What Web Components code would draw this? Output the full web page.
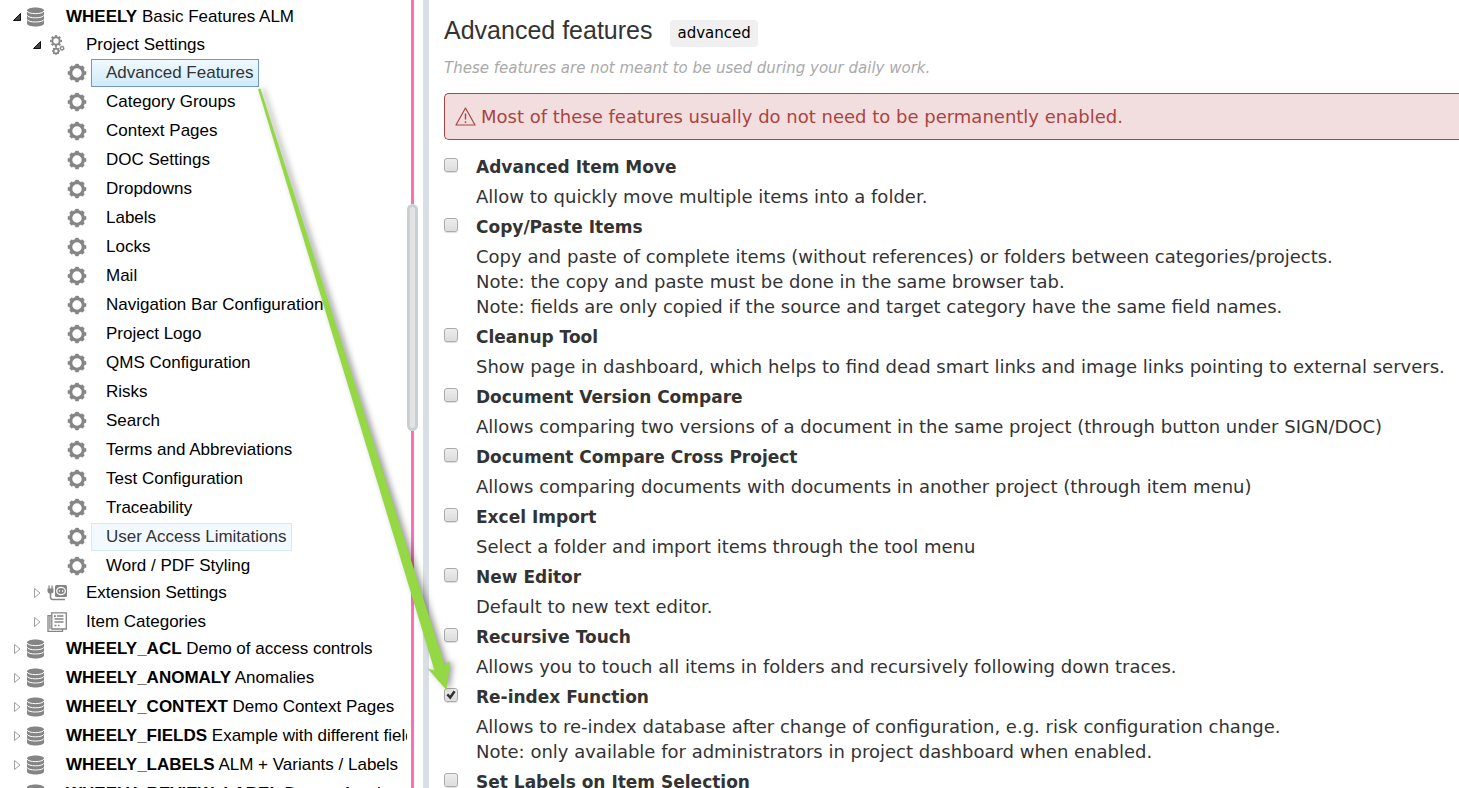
<!DOCTYPE html>
<html lang="en">
<head>
<meta charset="utf-8">
<title>Project settings – Advanced features</title>
<style>
  html, body { margin: 0; height: 100%; }
  body { overflow: hidden; background: #fff; color: #333; font-family: "DejaVu Sans", Verdana, sans-serif; font-size: 18px; }
</style>
</head>
<body>

<template id="tpl-shell">
  <style>
    :host { display: grid; grid-template-columns: 407px 11px 5px 6px minmax(0, 1fr); height: 100vh; overflow: hidden; position: relative; }
    nav, main { overflow: hidden; min-width: 0; min-height: 0; }
    .bar { background: #d9dfe4; grid-column: 4; }
    main { padding-left: 15px; grid-column: 5; }
  </style>
  <nav aria-label="Projects"><slot name="tree"></slot></nav>
  <scroll-rail></scroll-rail>
  <div class="bar"></div>
  <main><slot></slot></main>
  <slot name="overlay"></slot>
</template>

<template id="tpl-rail">
  <style>
    :host { display: grid; grid-template-rows: 204fr 227fr 357fr; justify-items: center; }
    i { width: 3px; background: #ff6fb7; }
    b { width: 11px; box-sizing: border-box; border: 3px solid #c9cfd3; border-radius: 6px; background: #e4e4e4; }
  </style>
  <i></i><b></b><i></i>
</template>

<template id="tpl-tree">
  <style>
    :host { display: block; padding-top: 2px; font-family: "Liberation Sans", Arial, sans-serif; font-size: 17px; color: #000; }
  </style>
  <slot></slot>
</template>

<template id="tpl-node">
  <style>
    :host { display: block; }
    .row { display: flex; align-items: center; height: 29px; padding-left: 7px; white-space: nowrap; }
    .toggle { all: unset; box-sizing: border-box; width: 20px; height: 20px; flex: none; display: flex; align-items: center; justify-content: center; }
    tree-icon { margin-right: 4px; }
    a { box-sizing: border-box; height: 28px; line-height: 26px; padding: 0 5px 0 14px; border: 1px solid transparent; color: inherit; text-decoration: none; }
    :host([state=selected]) a { border-color: #6f97c8; background: linear-gradient(#f0f9fe, #d0ebfa); color: #333; }
    :host([state=hover]) a { border-color: #d6eaf6; background: #f3faff; color: #333; }
    .kids { padding-left: 20px; }
    .kids.filled { margin: -1px 0 -2px; }
  </style>
  <div class="row">
    <span class="toggle"></span>
    <tree-icon></tree-icon>
    <a href="#"><b></b><span></span></a>
  </div>
  <div class="kids"><slot></slot></div>
</template>

<template id="tpl-header">
  <style>
    :host { display: block; padding-top: 16px; }
    .line { display: flex; align-items: flex-start; gap: 18px; }
    h1 { margin: 0; font: 25px/28px "Liberation Sans", Arial, sans-serif; }
    .tag { margin-top: 4px; padding: 0 7px; border-radius: 4px; background: #f0f0f0; color: #000; font-size: 15px; line-height: 27px; }
    p { margin: 11px 0 15px; color: #aaa; font-style: italic; font-size: 15px; line-height: 20px; }
  </style>
  <div class="line"><h1><slot name="title"></slot></h1><span class="tag"><slot name="tag"></slot></span></div>
  <p><slot></slot></p>
</template>

<template id="tpl-alert">
  <style>
    :host { display: flex; align-items: center; gap: 5px; box-sizing: border-box; padding: 10px; margin-bottom: 15px;
      border: 1px solid #a94442; border-right: 0; border-radius: 5px 0 0 5px; background: #f2dede; color: #a94442; line-height: 25px; }
    svg { flex: none; }
  </style>
  <svg width="21" height="20" viewBox="0 0 21 20" fill="none" stroke="currentColor" aria-hidden="true">
    <path d="M10.5 1 L20 18 H1 Z" stroke-width="1.2" stroke-linejoin="round"/>
    <path d="M10.5 6.500 V12.500" stroke-width="1.4"/><circle cx="10.5" cy="15.1" r=".9" fill="currentColor" stroke="none"/>
  </svg>
  <span><slot></slot></span>
</template>

<template id="tpl-option">
  <style>
    :host { display: grid; grid-template-columns: 14px minmax(0, 1fr); column-gap: 18px; margin-bottom: 6px; line-height: 25px; }
    input { appearance: none; box-sizing: border-box; width: 14px; height: 14px; margin: 3px 0 0; border: 1px solid #aaa; border-radius: 3px;
      background: linear-gradient(#ededed, #dcdcdc); box-shadow: 0 1px 1px #0002, inset 0 0 1px #fff; display: grid; place-items: center; }
    input:checked::after { content: ""; width: 10px; height: 10px; background: #333; clip-path: polygon(4% 52%, 22% 36%, 40% 56%, 76% 4%, 96% 20%, 44% 94%); }
    label { font-weight: bold; font-size: 17px; }
    .text { grid-column: 2; padding-top: 4px; white-space: nowrap; }
  </style>
  <input type="checkbox" id="box">
  <label for="box"></label>
  <div class="text"><slot></slot></div>
</template>

<template id="tpl-arrow">
  <style>
    :host { position: absolute; left: 0; top: 0; pointer-events: none; }
    svg { display: block; filter: drop-shadow(3px 0 3px #0006); }
  </style>
  <svg width="470" height="710" viewBox="0 0 470 710" aria-hidden="true">
    <path fill="#94d843" d="M258 89 L260.500 88.500 L444.500 665 L450 661.500 L446.500 690 L427.500 668.500 L434.500 670.500 Z"/>
  </svg>
</template>

<app-shell>
  <project-tree slot="tree">
    <tree-node icon="db" toggle="open" code="WHEELY" label="Basic Features ALM">
      <tree-node icon="gears" toggle="open" label="Project Settings">
        <tree-node icon="gear" label="Advanced Features" state="selected"></tree-node>
        <tree-node icon="gear" label="Category Groups"></tree-node>
        <tree-node icon="gear" label="Context Pages"></tree-node>
        <tree-node icon="gear" label="DOC Settings"></tree-node>
        <tree-node icon="gear" label="Dropdowns"></tree-node>
        <tree-node icon="gear" label="Labels"></tree-node>
        <tree-node icon="gear" label="Locks"></tree-node>
        <tree-node icon="gear" label="Mail"></tree-node>
        <tree-node icon="gear" label="Navigation Bar Configuration"></tree-node>
        <tree-node icon="gear" label="Project Logo"></tree-node>
        <tree-node icon="gear" label="QMS Configuration"></tree-node>
        <tree-node icon="gear" label="Risks"></tree-node>
        <tree-node icon="gear" label="Search"></tree-node>
        <tree-node icon="gear" label="Terms and Abbreviations"></tree-node>
        <tree-node icon="gear" label="Test Configuration"></tree-node>
        <tree-node icon="gear" label="Traceability"></tree-node>
        <tree-node icon="gear" label="User Access Limitations" state="hover"></tree-node>
        <tree-node icon="gear" label="Word / PDF Styling"></tree-node>
      </tree-node>
      <tree-node icon="plug" toggle="closed" label="Extension Settings"></tree-node>
      <tree-node icon="pages" toggle="closed" label="Item Categories"></tree-node>
    </tree-node>
    <tree-node icon="db" toggle="closed" code="WHEELY_ACL" label="Demo of access controls"></tree-node>
    <tree-node icon="db" toggle="closed" code="WHEELY_ANOMALY" label="Anomalies"></tree-node>
    <tree-node icon="db" toggle="closed" code="WHEELY_CONTEXT" label="Demo Context Pages"></tree-node>
    <tree-node icon="db" toggle="closed" code="WHEELY_FIELDS" label="Example with different fields"></tree-node>
    <tree-node icon="db" toggle="closed" code="WHEELY_LABELS" label="ALM + Variants / Labels"></tree-node>
    <tree-node icon="db" toggle="closed" code="WHEELY_REVIEW_LABEL" label="Demo of review label"></tree-node>
  </project-tree>

  <page-header><span slot="title">Advanced features</span><span slot="tag">advanced</span>These features are not meant to be used during your daily work.</page-header>
  <alert-box>Most of these features usually do not need to be permanently enabled.</alert-box>

  <feature-option name="Advanced Item Move">Allow to quickly move multiple items into a folder.</feature-option>
  <feature-option name="Copy/Paste Items">Copy and paste of complete items (without references) or folders between categories/projects.<br>Note: the copy and paste must be done in the same browser tab.<br>Note: fields are only copied if the source and target category have the same field names.</feature-option>
  <feature-option name="Cleanup Tool">Show page in dashboard, which helps to find dead smart links and image links pointing to external servers.</feature-option>
  <feature-option name="Document Version Compare">Allows comparing two versions of a document in the same project (through button under SIGN/DOC)</feature-option>
  <feature-option name="Document Compare Cross Project">Allows comparing documents with documents in another project (through item menu)</feature-option>
  <feature-option name="Excel Import">Select a folder and import items through the tool menu</feature-option>
  <feature-option name="New Editor">Default to new text editor.</feature-option>
  <feature-option name="Recursive Touch">Allows you to touch all items in folders and recursively following down traces.</feature-option>
  <feature-option name="Re-index Function" checked>Allows to re-index database after change of configuration, e.g. risk configuration change.<br>Note: only available for administrators in project dashboard when enabled.</feature-option>
  <feature-option name="Set Labels on Item Selection"></feature-option>

  <callout-arrow slot="overlay"></callout-arrow>
</app-shell>

<script>
  const register = (name, template, setup) => customElements.define(name, class extends HTMLElement {
    constructor() {
      super();
      this.attachShadow({ mode: 'open' }).append(document.getElementById(template).content.cloneNode(true));
    }
    connectedCallback() { if (setup) setup(this, this.shadowRoot); }
  });

  /* Tree glyphs, all drawn on a 20 by 20 grid */
  const ICONS = {
    db: `<path fill="#858585" d="M0 3.500 C0 -.5 17 -.5 17 3.500 V16.500 C17 20.500 0 20.500 0 16.500 Z"/>
      <g fill="none" stroke="#fff" stroke-width="1"><path d="M0 4 C1 7.500 16 7.500 17 4"/><path d="M0 8.200 C1 11.700 16 11.700 17 8.200"/><path d="M0 12.400 C1 15.900 16 15.900 17 12.400"/></g>`,
    gear: `<g fill="none" stroke="#858585"><circle cx="10" cy="10" r="6.300" stroke-width="3.200"/>
      <circle cx="10" cy="10" r="8.200" stroke-width="2.200" pathLength="16" stroke-dasharray="1.100 .9" stroke-dashoffset=".55"/></g>`,
    gears: `<g fill="none" stroke="#858585"><circle cx="9" cy="6" r="3.700" stroke-width="2"/>
      <circle cx="9" cy="6" r="5.100" stroke-width="1.700" pathLength="16" stroke-dasharray="1.100 .9" stroke-dashoffset=".55"/>
      <circle cx="9" cy="16" r="2.400" stroke-width="1.600"/><circle cx="9" cy="16" r="3.400" stroke-width="1.200" pathLength="16" stroke-dasharray="1 1" stroke-dashoffset=".5"/>
      <circle cx="15" cy="13.200" r="1.600" stroke-width="1.200"/><circle cx="15" cy="13.200" r="2.400" stroke-width=".8" pathLength="16" stroke-dasharray="1 1" stroke-dashoffset=".5"/></g>`,
    plug: `<g fill="#858585"><rect x="8" y="2" width="12" height="12" rx="1.500"/><path d="M.5 5.500 H6.500 V8 C6.500 10 5 10.500 3.500 10.500 C2 10.500 .5 10 .5 8 Z"/><rect x="1.400" y="2.500" width="1.300" height="3.500"/><rect x="4.400" y="2.500" width="1.300" height="3.500"/></g>
      <path d="M3.500 10 V14.500 Q3.500 16.500 6 16.500 H18" fill="none" stroke="#858585" stroke-width="1.500"/>
      <ellipse cx="14" cy="8" rx="4.300" ry="3.600" fill="none" stroke="#fff" stroke-width="1.200"/><circle cx="12.400" cy="8" r=".8" fill="#fff"/><circle cx="15.600" cy="8" r=".8" fill="#fff"/>`,
    pages: `<g fill="none" stroke="#858585" stroke-width="1.300"><path d="M4.500 3.700 H1 V19.300 H15.500 V17"/><path d="M4.800 .8 H19.300 V17 H4.800 Z"/><path d="M2.900 3.700 V17.300"/>
      <path d="M10 4 H16.500 M7.500 7 H16.500 M7.500 10 H16.500 M7.500 13.500 H9.500 M11 13.500 H12.500"/></g><rect x="7" y="3.200" width="1.800" height="1.800" fill="#858585"/>`
  };
  const TOGGLES = {
    open: `<svg width="8" height="8" viewBox="0 0 8 8" aria-hidden="true"><path d="M7.500 .5 V7.500 H.5 Z" fill="#444" stroke="#111"/></svg>`,
    closed: `<svg width="8" height="12" viewBox="0 0 8 12" aria-hidden="true"><path d="M1.500 1.500 L7 6 L1.500 10.500 Z" fill="#fff" stroke="#a0a0a0"/></svg>`
  };

  customElements.define('tree-icon', class extends HTMLElement {
    static observedAttributes = ['name'];
    constructor() { super(); this.attachShadow({ mode: 'open' }); }
    attributeChangedCallback(_, __, name) {
      this.shadowRoot.innerHTML = `<style>:host{display:block;flex:none;width:20px;height:20px}svg{display:block}</style>
        <svg width="20" height="20" viewBox="0 0 20 20" aria-hidden="true">${ICONS[name]}</svg>`;
    }
  });

  register('scroll-rail', 'tpl-rail');
  register('project-tree', 'tpl-tree');
  register('tree-node', 'tpl-node', (host, root) => {
    root.querySelector('tree-icon').setAttribute('name', host.getAttribute('icon'));
    const code = host.getAttribute('code'), toggle = host.getAttribute('toggle');
    root.querySelector('a b').textContent = code || '';
    root.querySelector('a span').textContent = (code ? ' ' : '') + host.getAttribute('label');
    root.querySelector('.kids').classList.toggle('filled', host.childElementCount > 0);
    if (toggle) {
      const button = document.createElement('button');
      button.className = 'toggle';
      button.setAttribute('aria-label', 'Toggle ' + host.getAttribute('label'));
      button.setAttribute('aria-expanded', toggle === 'open');
      button.innerHTML = TOGGLES[toggle];
      root.querySelector('.toggle').replaceWith(button);
    }
  });
  register('page-header', 'tpl-header');
  register('alert-box', 'tpl-alert');
  register('feature-option', 'tpl-option', (host, root) => {
    root.querySelector('label').textContent = host.getAttribute('name');
    root.querySelector('input').checked = host.hasAttribute('checked');
  });
  register('callout-arrow', 'tpl-arrow');
  register('app-shell', 'tpl-shell');
</script>
</body>
</html>
